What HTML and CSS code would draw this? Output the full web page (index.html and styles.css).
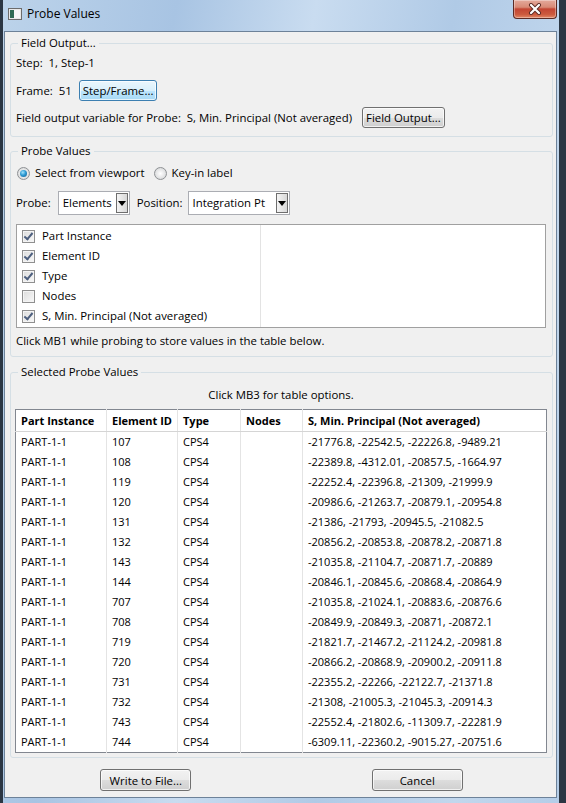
FILE: index.html
```html
<!DOCTYPE html>
<html>
<head>
<meta charset="utf-8">
<title>Probe Values</title>
<link rel="stylesheet" href="styles.css">
</head>
<body>
<div class="window">
  <div class="titlebar">
    <svg class="app-icon" width="14" height="12" viewBox="0 0 14 12">
      <rect x="0.5" y="0.5" width="13" height="11" fill="#e8e8e8" stroke="#6c6c6c"/>
      <rect x="2" y="2" width="4" height="8" fill="#2f6b54"/>
      <rect x="6" y="2" width="6" height="8" fill="#f6f6f6"/>
    </svg>
    <span class="title">Probe Values</span>
    <div class="close">
      <svg width="16" height="12" viewBox="0 0 16 12">
        <path d="M4 2 L12 10 M12 2 L4 10" stroke="#5a2a24" stroke-width="4" stroke-linecap="round"/>
        <path d="M4 2 L12 10 M12 2 L4 10" stroke="#ffffff" stroke-width="2.2" stroke-linecap="round"/>
      </svg>
    </div>
  </div>
  <div class="client">
    <fieldset class="group g-field">
      <legend>Field Output...</legend>
      <div class="row r-step">Step:&nbsp; 1, Step-1</div>
      <div class="row r-frame"><span>Frame:&nbsp; 51</span><button class="btn btn-focus">Step/Frame...</button></div>
      <div class="row r-var"><span>Field output variable for Probe:&nbsp; S, Min. Principal (Not averaged)</span><button class="btn">Field Output...</button></div>
    </fieldset>

    <fieldset class="group g-probe">
      <legend>Probe Values</legend>
      <div class="row r-radio">
        <label class="radio"><span class="rb checked"></span>Select from viewport</label>
        <label class="radio"><span class="rb"></span>Key-in label</label>
      </div>
      <div class="row r-combo">
        <span class="lbl">Probe:</span>
        <div class="combo c-elem"><span>Elements</span><span class="arrow"></span></div>
        <span class="lbl lbl-pos">Position:</span>
        <div class="combo c-pos"><span>Integration Pt</span><span class="arrow"></span></div>
      </div>
      <div class="checklist">
        <div class="col-left">
          <div class="cb-item"><span class="cb on"></span>Part Instance</div>
          <div class="cb-item"><span class="cb on"></span>Element ID</div>
          <div class="cb-item"><span class="cb on"></span>Type</div>
          <div class="cb-item"><span class="cb"></span>Nodes</div>
          <div class="cb-item"><span class="cb on"></span>S, Min. Principal (Not averaged)</div>
        </div>
        <div class="col-right"></div>
      </div>
      <div class="row r-note">Click MB1 while probing to store values in the table below.</div>
    </fieldset>

    <fieldset class="group g-selected">
      <legend>Selected Probe Values</legend>
      <div class="r-mb3">Click MB3 for table options.</div>
      <table class="values">
        <colgroup>
          <col class="w-part"><col class="w-id"><col class="w-type"><col class="w-nodes"><col class="w-s">
        </colgroup>
        <thead>
          <tr><th>Part Instance</th><th>Element ID</th><th>Type</th><th>Nodes</th><th>S, Min. Principal (Not averaged)</th></tr>
        </thead>
        <tbody>
          <tr><td>PART-1-1</td><td>107</td><td>CPS4</td><td></td><td>-21776.8, -22542.5, -22226.8, -9489.21</td></tr>
          <tr><td>PART-1-1</td><td>108</td><td>CPS4</td><td></td><td>-22389.8, -4312.01, -20857.5, -1664.97</td></tr>
          <tr><td>PART-1-1</td><td>119</td><td>CPS4</td><td></td><td>-22252.4, -22396.8, -21309, -21999.9</td></tr>
          <tr><td>PART-1-1</td><td>120</td><td>CPS4</td><td></td><td>-20986.6, -21263.7, -20879.1, -20954.8</td></tr>
          <tr><td>PART-1-1</td><td>131</td><td>CPS4</td><td></td><td>-21386, -21793, -20945.5, -21082.5</td></tr>
          <tr><td>PART-1-1</td><td>132</td><td>CPS4</td><td></td><td>-20856.2, -20853.8, -20878.2, -20871.8</td></tr>
          <tr><td>PART-1-1</td><td>143</td><td>CPS4</td><td></td><td>-21035.8, -21104.7, -20871.7, -20889</td></tr>
          <tr><td>PART-1-1</td><td>144</td><td>CPS4</td><td></td><td>-20846.1, -20845.6, -20868.4, -20864.9</td></tr>
          <tr><td>PART-1-1</td><td>707</td><td>CPS4</td><td></td><td>-21035.8, -21024.1, -20883.6, -20876.6</td></tr>
          <tr><td>PART-1-1</td><td>708</td><td>CPS4</td><td></td><td>-20849.9, -20849.3, -20871, -20872.1</td></tr>
          <tr><td>PART-1-1</td><td>719</td><td>CPS4</td><td></td><td>-21821.7, -21467.2, -21124.2, -20981.8</td></tr>
          <tr><td>PART-1-1</td><td>720</td><td>CPS4</td><td></td><td>-20866.2, -20868.9, -20900.2, -20911.8</td></tr>
          <tr><td>PART-1-1</td><td>731</td><td>CPS4</td><td></td><td>-22355.2, -22266, -22122.7, -21371.8</td></tr>
          <tr><td>PART-1-1</td><td>732</td><td>CPS4</td><td></td><td>-21308, -21005.3, -21045.3, -20914.3</td></tr>
          <tr><td>PART-1-1</td><td>743</td><td>CPS4</td><td></td><td>-22552.4, -21802.6, -11309.7, -22281.9</td></tr>
          <tr><td>PART-1-1</td><td>744</td><td>CPS4</td><td></td><td>-6309.11, -22360.2, -9015.27, -20751.6</td></tr>
        </tbody>
      </table>
    </fieldset>

    <div class="actions">
      <div class="act"><button class="btn btn-wide">Write to File...</button></div>
      <div class="act"><button class="btn btn-wide">Cancel</button></div>
    </div>
  </div>
</div>
</body>
</html>
```

FILE: styles.css
```css
html, body {
  margin: 0;
  padding: 0;
}
body {
  background: #26313d;
  font-family: "Open Sans", "Noto Sans", sans-serif;
  font-size: 11.4px;
  line-height: 16px;
  color: #000;
}
.window {
  width: 566px;
  height: 803px;
  box-sizing: border-box;
  border-left: 3px solid #2b3643;
  border-right: 7px solid #2b3643;
  padding: 0 2px 5px 1px;
  background: linear-gradient(100deg, #bcd3ea 0%, #a8c4e3 25%, #c9dcf0 45%, #b0cae6 65%, #c2d7ed 85%, #b4cde8 100%);
  display: flex;
  flex-direction: column;
}
.titlebar {
  height: 31px;
  flex: none;
  display: flex;
  align-items: flex-start;
}
.app-icon {
  margin: 8px 0 0 4px;
  flex: none;
}
.title {
  margin: 6px 0 0 5px;
  font-size: 12px;
  color: #000;
}
.close {
  margin-left: auto;
  width: 44px;
  height: 19px;
  box-sizing: border-box;
  border: 1px solid #5b2b25;
  border-top: none;
  border-radius: 0 0 4px 4px;
  background: linear-gradient(#e3a99c 0%, #d88a76 40%, #c34533 50%, #cc5a3e 80%, #e28766 100%);
  display: flex;
  align-items: center;
  justify-content: center;
  box-shadow: inset 0 0 0 1px rgba(255,255,255,0.35);
}
.client {
  flex: 1;
  background: #f0f0f0;
  border: 1px solid #6d8299;
  padding: 0 3px 0 5px;
  display: flex;
  flex-direction: column;
}
.group {
  margin: 0;
  border: 1px solid #d5dfe5;
  border-radius: 3px;
  padding: 0 6px 0 5px;
  min-width: 0;
}
.group legend {
  padding: 0 3px;
  margin-left: 2px;
  line-height: 16px;
}
.g-field {
  margin-top: 3px;
  padding-top: 2px;
  padding-bottom: 8px;
}
.g-probe {
  margin-top: 6px;
  padding-top: 5px;
  padding-bottom: 7px;
}
.g-selected {
  margin-top: 7px;
  padding-top: 7px;
  padding-bottom: 4px;
}
.row {
  display: flex;
  align-items: center;
  white-space: pre;
}
.r-step {
  height: 20px;
}
.r-frame {
  height: 21px;
  margin-top: 7px;
  gap: 7px;
}
.r-var {
  height: 21px;
  margin-top: 6px;
  gap: 10px;
}
.btn {
  font: inherit;
  color: #000;
  height: 21px;
  padding: 0 3px;
  box-sizing: border-box;
  border: 1px solid #707070;
  border-radius: 3px;
  background: linear-gradient(#f2f2f2 0%, #ebebeb 50%, #dddddd 51%, #cfcfcf 100%);
  box-shadow: inset 0 0 0 1px rgba(255,255,255,0.7);
  line-height: 17px;
}
.btn-focus {
  border-color: #3c7fb1;
  background: linear-gradient(#eaf6fd 0%, #d9f0fc 50%, #bee6fd 51%, #a7d9f5 100%);
}
.btn-wide {
  width: 91px;
  height: 22px;
}
.r-radio {
  height: 18px;
}
.radio {
  display: flex;
  align-items: center;
  gap: 5px;
  margin-left: 1px;
  margin-right: 8px;
}
.rb {
  width: 13px;
  height: 13px;
  box-sizing: border-box;
  border-radius: 50%;
  border: 1px solid #8e9194;
  background: radial-gradient(circle at 50% 50%, #ffffff 0%, #e2e3e4 60%, #c8c9ca 100%);
  display: flex;
  align-items: center;
  justify-content: center;
}
.rb.checked::after {
  content: "";
  width: 7px;
  height: 7px;
  border-radius: 50%;
  background: radial-gradient(circle at 40% 35%, #a3e2fb 0%, #2c9ad4 45%, #165a8c 100%);
}
.r-combo {
  height: 24px;
  margin-top: 9px;
}
.lbl {
  margin-right: 7px;
}
.lbl-pos {
  margin-left: 7px;
  margin-right: 5px;
}
.combo {
  height: 24px;
  box-sizing: border-box;
  background: #fff;
  border: 1px solid #abadb3;
  display: flex;
  align-items: center;
  padding-left: 4px;
  position: relative;
}
.c-elem { width: 72px; }
.c-pos { width: 102px; }
.combo .arrow {
  margin-left: auto;
  margin-right: 1px;
  width: 12px;
  height: 20px;
  box-sizing: border-box;
  border: 1px solid #6e6e6e;
  background: linear-gradient(90deg, #f4f4f4, #d8d8d8);
  display: flex;
  align-items: center;
  justify-content: center;
}
.combo .arrow::after {
  content: "";
  border-left: 4px solid transparent;
  border-right: 4px solid transparent;
  border-top: 5px solid #000;
}
.checklist {
  margin-top: 9px;
  height: 104px;
  box-sizing: border-box;
  border: 1px solid #a0a0a0;
  background: #fff;
  display: grid;
  grid-template-columns: 244px 1fr;
}
.col-left {
  border-right: 1px solid #e3e3e3;
  padding-top: 1px;
}
.cb-item {
  height: 20px;
  display: flex;
  align-items: center;
  padding-left: 5px;
  gap: 7px;
}
.cb {
  width: 13px;
  height: 13px;
  box-sizing: border-box;
  border: 1px solid #8f8f8f;
  background: linear-gradient(135deg, #dcdcdc, #f8f8f8);
  box-shadow: inset 0 0 0 1px #f4f4f4;
  position: relative;
}
.cb.on::after {
  content: "";
  position: absolute;
  left: 3px;
  top: 0px;
  width: 3px;
  height: 7px;
  border-right: 2px solid #4d5f7e;
  border-bottom: 2px solid #4d5f7e;
  transform: rotate(40deg);
}
.r-note {
  height: 16px;
  margin-top: 5px;
}
.r-mb3 {
  text-align: center;
  height: 16px;
}
.values {
  margin-top: 6px;
  margin-left: -1px;
  width: 532px;
  border-collapse: collapse;
  border: 1px solid #828790;
  background: #fff;
  table-layout: fixed;
  font-size: 11px;
}
.w-part { width: 91px; }
.w-id { width: 71px; }
.w-type { width: 63px; }
.w-nodes { width: 62px; }
.w-s { width: auto; }
.values th, .values td {
  padding: 0 0 0 5px;
  text-align: left;
  white-space: nowrap;
  overflow: hidden;
  border-left: 1px solid #e4e4e4;
}
.values th:first-child, .values td:first-child {
  border-left: none;
}
.values th {
  height: 21px;
  font-weight: bold;
  border-bottom: 1px solid #d5d5d5;
}
.values td {
  height: 20px;
  padding-top: 0;
}
.actions {
  margin-top: 11px;
  display: grid;
  grid-template-columns: 1fr 1fr;
}
.act {
  display: flex;
  justify-content: center;
}
```
